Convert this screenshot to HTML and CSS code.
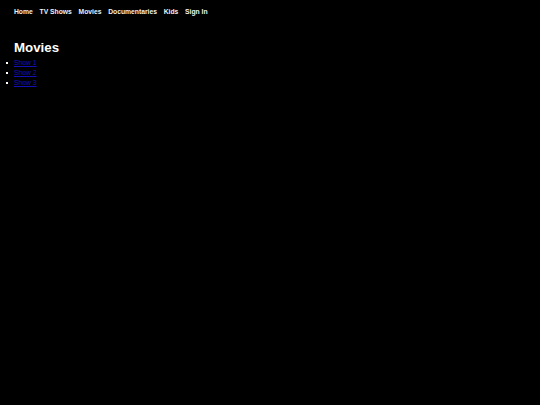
FILE: index.html
```html
<!DOCTYPE html>
<html lang="en">
<head>
<meta charset="utf-8">
<title>Movies</title>
<link rel="stylesheet" href="styles.css">
</head>
<body>
<nav class="nav">
  <a class="nav-link" href="#">Home</a>
  <a class="nav-link" href="#">TV Shows</a>
  <a class="nav-link" href="#">Movies</a>
  <a class="nav-link" href="#">Documentaries</a>
  <a class="nav-link" href="#">Kids</a>
  <a class="nav-link" href="#">Sign In</a>
</nav>
<main class="content">
  <h1 class="title">Movies</h1>
  <ul class="show-list">
    <li class="show-item"><a class="show-link" href="#">Show 1</a></li>
    <li class="show-item"><a class="show-link" href="#">Show 2</a></li>
    <li class="show-item"><a class="show-link" href="#">Show 3</a></li>
  </ul>
</main>
</body>
</html>
```
FILE: styles.css
```css
html, body {
  margin: 0;
  padding: 0;
  background: #000;
  height: 100%;
}
body {
  font-family: "Liberation Sans", Arial, sans-serif;
  color: #fff;
}
.nav {
  display: flex;
  gap: 6.75px;
  padding: 8px 14px 0;
  font-size: 6.75px;
  font-weight: bold;
  line-height: 7.5px;
}
.nav-link {
  color: #f2f2f2;
  text-decoration: none;
}
.content {
  padding: 0 14px;
}
.title {
  margin: 24px 0 3px;
  font-size: 13.3px;
  line-height: 15px;
  font-weight: bold;
}
.show-list {
  margin: 0;
  padding: 0;
  font-size: 6.75px;
  line-height: 10px;
  list-style: none;
}
.show-item {
  display: flex;
  align-items: center;
  margin-left: -8px;
}
.show-item::before {
  content: "";
  width: 2px;
  height: 2px;
  background: #fff;
  margin-right: 6px;
}
.show-link {
  color: #1212b4;
}
```
